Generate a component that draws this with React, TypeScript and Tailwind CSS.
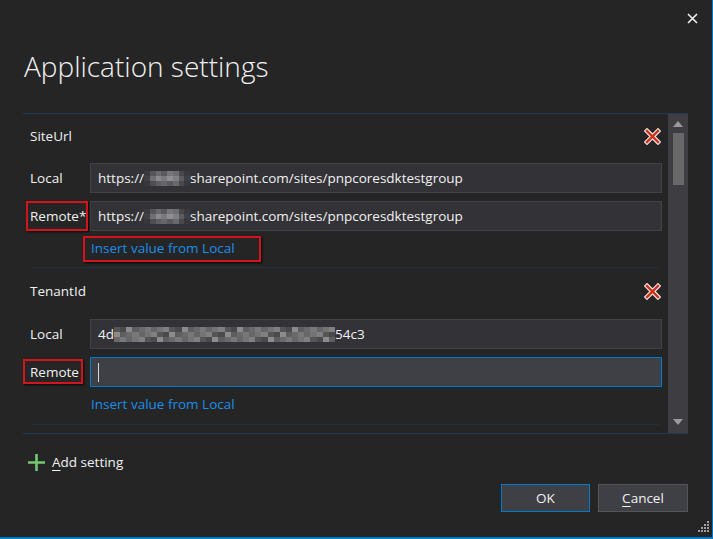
import { FC } from 'react';

// gray levels for the pixelated (blurred) parts of the values
const blurA = [
  ['#3a3a3e', '#55555a', '#6a6a6e', '#5a5a5e', '#77777a', '#6e6e72', '#48484c', '#3a3a3e'],
  ['#404044', '#707074', '#8a8a8e', '#7a7a7e', '#909094', '#808084', '#5c5c60', '#404044'],
  ['#38383c', '#4e4e52', '#5e5e62', '#66666a', '#5a5a5e', '#6a6a6e', '#4a4a4e', '#38383c'],
];

const blurB = Array.from({ length: 3 }, (_, r) =>
  Array.from({ length: 36 }, (_, c) => {
    const v = [0x55, 0x6a, 0x80, 0x5e, 0x74, 0x8c, 0x66, 0x4a, 0x78][(c * 7 + r * 5) % 9];
    const h = v.toString(16);
    return `#${h}${h}${h}`;
  })
);

const Pixelated: FC<{ rows: string[][]; width: number }> = ({ rows, width }) => (
  <span className="inline-flex flex-col align-middle blur-[0.6px]" style={{ width }}>
    {rows.map((row, i) => (
      <span key={i} className="flex h-[5px]">
        {row.map((c, j) => (
          <span key={j} className="flex-1" style={{ backgroundColor: c }} />
        ))}
      </span>
    ))}
  </span>
);

const DeleteIcon = () => (
  <svg width="17" height="17" viewBox="0 0 17 17">
    <path d="M3 3 L14 14 M14 3 L3 14" stroke="#f3e4e0" strokeWidth="4.6" strokeLinecap="square" />
    <path d="M3 3 L14 14 M14 3 L3 14" stroke="#c8321c" strokeWidth="2.4" strokeLinecap="square" />
  </svg>
);

const RedBox: FC<{ className: string }> = ({ className }) => (
  <span
    className={`absolute border-2 border-[#d4141c] shadow-[1px_1px_2px_rgba(0,0,0,0.8)] pointer-events-none ${className}`}
  />
);

const inputBase = 'w-[572px] h-[30px] flex items-center pl-[7px] text-[13.5px] text-[#f1f1f1] whitespace-nowrap';

export default function App() {
  return (
    <div className="relative w-[713px] h-[539px] bg-[#252526] border-r border-b-2 border-[#007acc] flex flex-col text-[#f1f1f1] font-['Open_Sans','Noto_Sans',sans-serif] overflow-hidden">
      {/* header */}
      <div className="h-[113px] flex flex-col shrink-0">
        <div className="flex justify-end pt-[13px] pr-[14px]">
          <svg width="11" height="11" viewBox="0 0 11 11">
            <path d="M1 1 L10 10 M10 1 L1 10" stroke="#f0f0f0" strokeWidth="1.6" />
          </svg>
        </div>
        <div className="pl-[24px] mt-[24px] text-[28px] leading-[36px] font-light text-[#f1f1f1]">
          Application settings
        </div>
      </div>

      {/* settings panel */}
      <div className="ml-[23px] w-[665px] h-[321px] border-y border-[#1c3a52] flex shrink-0">
        <div className="flex-1 flex flex-col overflow-hidden">
          {/* SiteUrl */}
          <div className="flex flex-col pl-[7px]">
            <div className="h-[44px] flex items-center justify-between pr-[7px]">
              <span className="text-[13.5px]">SiteUrl</span>
              <DeleteIcon />
            </div>
            <div className="mt-[5px] flex items-center">
              <span className="w-[60px] text-[13.5px]">Local</span>
              <div className={`${inputBase} bg-[#333337] border border-[#434346]`}>
                https://<Pixelated rows={blurA} width={46} />sharepoint.com/sites/pnpcoresdktestgroup
              </div>
            </div>
            <div className="mt-[8px] flex items-center">
              <span className="w-[60px] text-[13.5px] relative">
                Remote*
                <RedBox className="-left-[4px] right-[2px] -top-[5px] -bottom-[5px]" />
              </span>
              <div className={`${inputBase} bg-[#333337] border border-[#434346]`}>
                https://<Pixelated rows={blurA} width={46} />sharepoint.com/sites/pnpcoresdktestgroup
              </div>
            </div>
            <div className="mt-[7px] mb-[9px] h-[20px] flex items-center pl-[61px]">
              <span className="relative text-[13.5px] text-[#1c8ee6]">
                Insert value from Local
                <RedBox className="-left-[8px] -right-[26px] -top-[2px] -bottom-[4px]" />
              </span>
            </div>
          </div>
          <div className="mx-[10px] h-px bg-[#1e3242]" />

          {/* TenantId */}
          <div className="flex flex-col pl-[7px]">
            <div className="h-[46px] flex items-center justify-between pr-[7px]">
              <span className="text-[13.5px]">TenantId</span>
              <DeleteIcon />
            </div>
            <div className="mt-[5px] flex items-center">
              <span className="w-[60px] text-[13.5px]">Local</span>
              <div className={`${inputBase} bg-[#333337] border border-[#434346]`}>
                4d<Pixelated rows={blurB} width={221} />54c3
              </div>
            </div>
            <div className="mt-[8px] flex items-center">
              <span className="w-[60px] text-[13.5px] relative">
                Remote
                <RedBox className="-left-[7px] w-[60px] -top-[3px] -bottom-[2px]" />
              </span>
              <div className={`${inputBase} bg-[#3f3f46] border border-[#007acc]`}>
                <span className="w-px h-[19px] bg-[#d8d8d8]" />
              </div>
            </div>
            <div className="mt-[7px] mb-[10px] h-[20px] flex items-center pl-[61px]">
              <span className="text-[13.5px] text-[#1c8ee6]">Insert value from Local</span>
            </div>
          </div>
          <div className="mx-[10px] h-px bg-[#1e3242]" />
        </div>

        {/* scrollbar */}
        <div className="w-[20px] bg-[#3e3e42] flex flex-col items-center">
          <svg width="10" height="6" viewBox="0 0 10 6" className="mt-[7px]">
            <path d="M0 6 L5 0 L10 6 Z" fill="#9a9a9a" />
          </svg>
          <div className="mt-[6px] w-[11px] h-[52px] bg-[#686868]" />
          <div className="flex-1" />
          <svg width="10" height="6" viewBox="0 0 10 6" className="mb-[8px]">
            <path d="M0 0 L10 0 L5 6 Z" fill="#9a9a9a" />
          </svg>
        </div>
      </div>

      {/* add setting */}
      <div className="mt-[18px] h-[20px] pl-[28px] flex items-center gap-[7px]">
        <svg width="17" height="17" viewBox="0 0 17 17">
          <path d="M8.5 0 V17 M0 8.5 H17" stroke="#74c774" strokeWidth="2.6" />
        </svg>
        <span className="text-[13.5px]">
          <span className="underline underline-offset-[3px]">A</span>dd setting
        </span>
      </div>

      {/* buttons */}
      <div className="mt-[12px] flex justify-end gap-[8px] pr-[24px]">
        <button className="w-[89px] h-[28px] bg-[#3f3f46] border border-[#007acc] text-[13.5px] text-[#f1f1f1]">
          OK
        </button>
        <button className="w-[90px] h-[28px] bg-[#3f3f46] border border-[#555555] text-[13.5px] text-[#f1f1f1]">
          <span className="underline underline-offset-[3px]">C</span>ancel
        </button>
      </div>

      {/* resize grip */}
      <svg width="13" height="13" viewBox="0 0 13 13" className="absolute right-[2px] bottom-[4px]">
        {[
          [10, 1], [10, 4], [7, 4], [10, 7], [7, 7], [4, 7], [10, 10], [7, 10], [4, 10], [1, 10],
        ].map(([x, y], i) => (
          <rect key={i} x={x} y={y} width="2" height="2" fill="#a0a0a0" />
        ))}
      </svg>
    </div>
  );
}
